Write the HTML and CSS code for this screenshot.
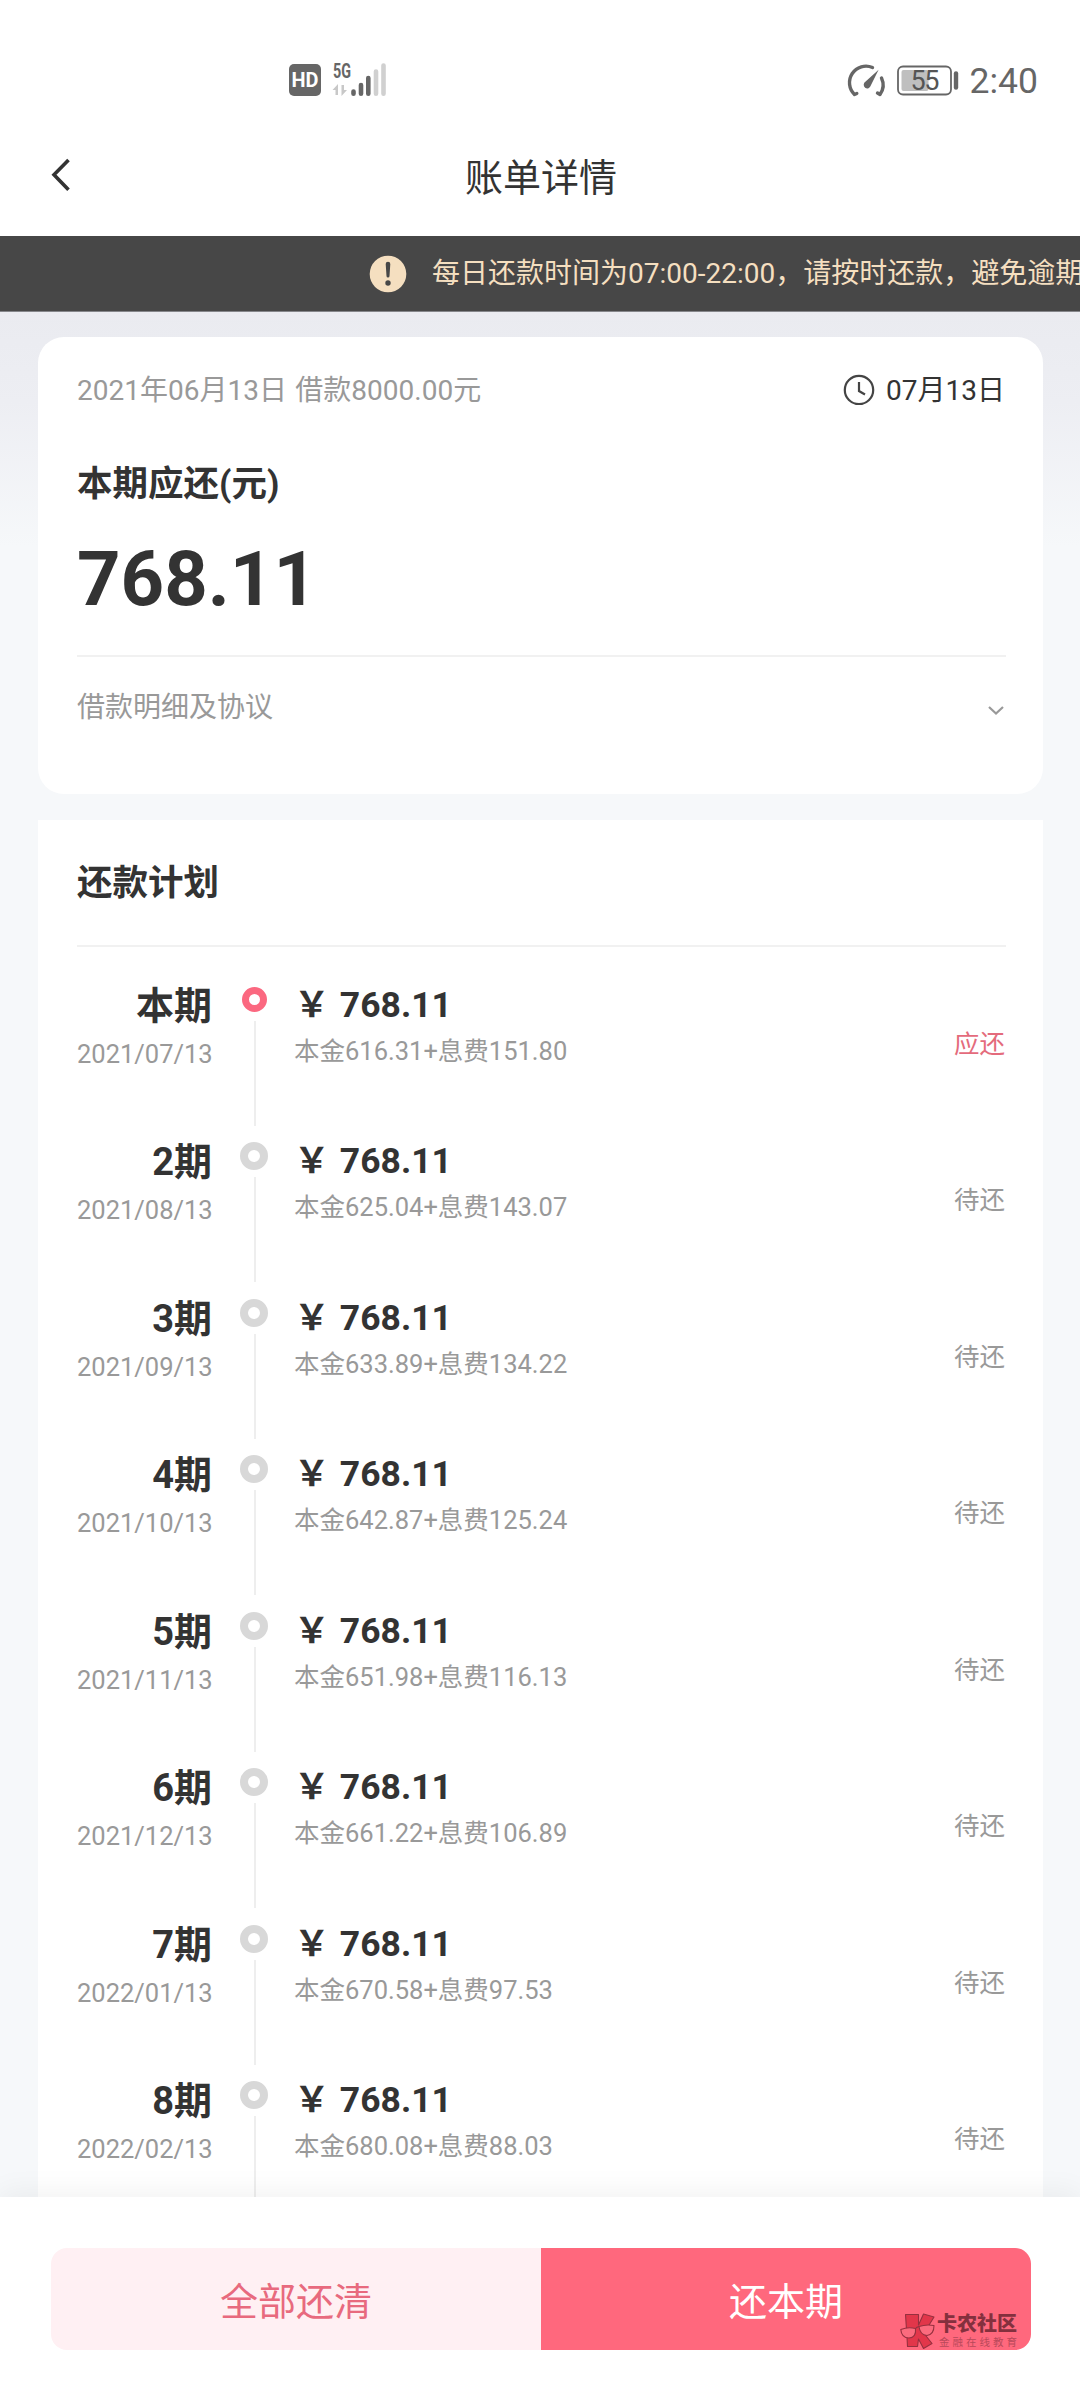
FILE: index.html
```html
<!DOCTYPE html>
<html lang="zh-CN">
<head>
<meta charset="utf-8">
<title>账单详情</title>
<link rel="stylesheet" href="styles.css">
</head>
<body>
<div class="screen">
  <div class="status-bar">
    <svg class="status-signal" width="100" height="38" viewBox="0 0 100 38">
      <rect x="1" y="4" width="32" height="32" rx="5" fill="#666"/>
      <text x="17" y="26.500" class="hd" text-anchor="middle" textLength="27" lengthAdjust="spacingAndGlyphs">HD</text>
      <text x="45" y="18" class="net" textLength="18" lengthAdjust="spacingAndGlyphs">5G</text>
      <path d="M44.500 30L50 24v11h-2.500v-5zM59 30l-5.500 6V25H56v5z" fill="#c8c8c8"/>
      <g stroke-width="4.600" stroke-linecap="round">
        <path d="M65.500 31.500v2.200M73 25v8.700M80.300 18v15.700" stroke="#666"/>
        <path d="M88 11.500v22.200M95.500 5.500v28.200" stroke="#d0d0d0"/>
      </g>
    </svg>
    <svg class="status-power" width="116" height="38" viewBox="0 0 116 38">
      <g fill="none" stroke="#666" stroke-width="3.400" stroke-linecap="round" stroke-linejoin="round">
        <path d="M26.500 7.500A16.500 16.500 0 0 0 8.500 34.500L10.800 33.500M35.500 18A16.500 16.500 0 0 1 34 34.500L31.500 33"/>
      </g>
      <path d="M32.600 9.800L24.800 25.600A3.600 3.600 0 1 1 19.600 21.600z" fill="#666"/>
      <rect x="52" y="6.500" width="53" height="28" rx="5" fill="none" stroke="#666" stroke-width="1.800"/>
      <rect x="55.500" y="10" width="27" height="21" rx="2" fill="#bfbfbf"/>
      <text x="79" y="29.500" class="level" text-anchor="middle" textLength="29">55</text>
      <path d="M110 13.500v14" stroke="#666" stroke-width="4.400" stroke-linecap="round"/>
    </svg>
    <span class="clock">2:40</span>
  </div>

  <header class="nav">
    <svg class="back" width="24" height="38" viewBox="0 0 24 38"><path d="M19.500 4L5 18.800 19.500 33.800" fill="none" stroke="#333" stroke-width="3.600"/></svg>
    <h1 class="nav-title">账单详情</h1>
  </header>

  <div class="notice">
    <svg class="notice-icon" width="38" height="38" viewBox="0 0 38 38">
      <circle cx="19" cy="19" r="18.300" fill="#f5dfc0"/>
      <path d="M16.700 9a2.300 2.300 0 0 1 4.600 0l-.8 12a1.500 1.500 0 0 1-3 0z" fill="#474747"/>
      <circle cx="19" cy="28" r="2.700" fill="#474747"/>
    </svg>
    <span class="notice-text">每日还款时间为07:00-22:00，请按时还款，避免逾期</span>
  </div>

  <main class="content">
    <section class="card summary">
      <div class="summary-head">
        <span class="loan">2021年06月13日 借款8000.00元</span>
        <span class="due">
          <svg width="32" height="34" viewBox="0 0 32 34" fill="none" stroke="#444"><circle cx="16" cy="19" r="14.200" stroke-width="2.200"/><path d="M16 11v9l6 3.500" stroke-width="2.200"/></svg>
          07月13日
        </span>
      </div>
      <h2 class="summary-label">本期应还(元)</h2>
      <div class="summary-amount">768.11</div>
      <div class="summary-more">
        <span>借款明细及协议</span>
        <svg class="chevron" width="18" height="12" viewBox="0 0 18 12"><path d="M2 2l7 6.500L16 2" fill="none" stroke="#999" stroke-width="2.200"/></svg>
      </div>
    </section>

    <section class="card plan">
      <h2 class="plan-title">还款计划</h2>
      <ul class="periods">
        <li class="period current">
          <div class="when"><b>本期</b><span>2021/07/13</span></div>
          <div class="rail"><i class="dot"></i><i class="line"></i></div>
          <div class="what"><b>￥ 768.11</b><span>本金616.31+息费151.80</span></div>
          <span class="state">应还</span>
        </li>
        <li class="period">
          <div class="when"><b>2期</b><span>2021/08/13</span></div>
          <div class="rail"><i class="dot"></i><i class="line"></i></div>
          <div class="what"><b>￥ 768.11</b><span>本金625.04+息费143.07</span></div>
          <span class="state">待还</span>
        </li>
        <li class="period">
          <div class="when"><b>3期</b><span>2021/09/13</span></div>
          <div class="rail"><i class="dot"></i><i class="line"></i></div>
          <div class="what"><b>￥ 768.11</b><span>本金633.89+息费134.22</span></div>
          <span class="state">待还</span>
        </li>
        <li class="period">
          <div class="when"><b>4期</b><span>2021/10/13</span></div>
          <div class="rail"><i class="dot"></i><i class="line"></i></div>
          <div class="what"><b>￥ 768.11</b><span>本金642.87+息费125.24</span></div>
          <span class="state">待还</span>
        </li>
        <li class="period">
          <div class="when"><b>5期</b><span>2021/11/13</span></div>
          <div class="rail"><i class="dot"></i><i class="line"></i></div>
          <div class="what"><b>￥ 768.11</b><span>本金651.98+息费116.13</span></div>
          <span class="state">待还</span>
        </li>
        <li class="period">
          <div class="when"><b>6期</b><span>2021/12/13</span></div>
          <div class="rail"><i class="dot"></i><i class="line"></i></div>
          <div class="what"><b>￥ 768.11</b><span>本金661.22+息费106.89</span></div>
          <span class="state">待还</span>
        </li>
        <li class="period">
          <div class="when"><b>7期</b><span>2022/01/13</span></div>
          <div class="rail"><i class="dot"></i><i class="line"></i></div>
          <div class="what"><b>￥ 768.11</b><span>本金670.58+息费97.53</span></div>
          <span class="state">待还</span>
        </li>
        <li class="period">
          <div class="when"><b>8期</b><span>2022/02/13</span></div>
          <div class="rail"><i class="dot"></i><i class="line"></i></div>
          <div class="what"><b>￥ 768.11</b><span>本金680.08+息费88.03</span></div>
          <span class="state">待还</span>
        </li>
      </ul>
    </section>
  </main>

  <footer class="actions">
    <button class="btn btn-all">全部还清</button>
    <button class="btn btn-now">还本期</button>
    <div class="watermark">
      <svg width="36" height="36" viewBox="0 0 36 36" stroke="#96303f" stroke-width="1.100" stroke-linejoin="round">
        <path d="M5.500 1.500H18.500V12L23.500 1 34 4 26 17 24.500 21 32 30.500 23.500 35.500 18.500 26 17.500 33.500H7.500L7 24z" fill="#e2364a"/>
        <path d="M.8 16.500Q8 13.500 15.500 15.500 16.500 24.500 9 25 1.500 25 .8 16.500zM19 13.500Q26 11 34 12.500 34 21.500 27 22.500 20 22 19 13.500zM15.500 15.800Q17 13.500 19 14" fill="#fb6b7e"/>
      </svg>
      <div class="mark-text"><b>卡农社区</b><span>金融在线教育</span></div>
    </div>
  </footer>
</div>
</body>
</html>
```
FILE: styles.css
```css
* { box-sizing: border-box; }
body, h1, h2, ul { margin: 0; padding: 0; }
body {
  width: 1080px;
  font-family: Roboto, "Noto Sans CJK SC", sans-serif;
  color: #333;
  background: #fff;
}
.screen {
  display: flex;
  flex-direction: column;
  height: 2400px;
  overflow: hidden;
}

.status-bar {
  display: flex;
  flex: none;
  height: 120px;
  padding: 60px 42px 0 288px;
  color: #666;
}
.status-signal { margin-right: auto; }
.status-power { margin-right: 8px; }
.clock { font-size: 35.500px; line-height: 43px; }
.hd { font-size: 20px; font-weight: 700; fill: #fff; }
.net { font-size: 20px; font-weight: 700; fill: #666; }
.level { font-size: 27px; fill: #555; }

.nav {
  display: grid;
  grid-template-columns: 90px 1fr 88px;
  align-items: center;
  flex: none;
  height: 116px;
}
.back { margin: -6px 0 0 49px; }
.nav-title {
  grid-column: 2;
  font-size: 38px;
  font-weight: 400;
  line-height: 56px;
  text-align: center;
}

.notice {
  display: flex;
  align-items: center;
  flex: none;
  gap: 25px;
  height: 76px;
  padding-left: 369px;
  overflow: hidden;
  background: #474747;
  border-bottom: 1px solid #85868a;
}
.notice-icon { flex: none; }
.notice-text {
  color: #f5dfc0;
  font-size: 28px;
  line-height: 40px;
  white-space: nowrap;
}

.content {
  display: flex;
  flex: 1;
  flex-direction: column;
  gap: 26px;
  min-height: 0;
  padding: 25px 37px 0 38px;
  overflow: hidden;
  background: linear-gradient(#eaebf0 0, #edeef3 90px, #f6f8fa 235px);
}
.card { flex: none; padding: 0 37px 0 39px; background: #fff; }

.summary { height: 457px; border-radius: 26px; }
.summary-head {
  display: flex;
  align-items: center;
  justify-content: space-between;
  height: 102px;
  padding-right: 1px;
  font-size: 28px;
}
.loan { color: #999; word-spacing: 1.500px; }
.due { display: flex; align-items: center; gap: 11px; }
.summary-label { font-size: 35.500px; line-height: 50px; font-weight: 700; margin-top: 20px; }
.summary-amount {
  height: 148px;
  padding-top: 25px;
  font-size: 76px;
  font-weight: 700;
  line-height: 90px;
  border-bottom: 2px solid #f1f1f1;
}
.summary-more {
  display: flex;
  align-items: center;
  justify-content: space-between;
  height: 95px;
  padding-right: 1px;
  color: #999;
  font-size: 28px;
}
.chevron { margin-top: 13px; }

.plan-title {
  height: 127px;
  font-size: 35.500px;
  font-weight: 700;
  line-height: 126px;
  border-bottom: 2px solid #f1f1f1;
}
.periods { list-style: none; padding-top: 27px; }
.period { display: flex; height: 156.450px; }
.when { width: 135px; text-align: right; white-space: nowrap; }
.when b, .what b, .when span, .what span { display: block; }
.when b { font-size: 38px; line-height: 60px; padding-top: 2px; margin-bottom: -2px; }
.when span, .what span, .state { font-size: 25.500px; line-height: 38px; color: #999; }
.when span { margin-top: 1px; }
.rail {
  display: flex;
  flex-direction: column;
  align-items: center;
  width: 28px;
  margin-left: 28px;
}
.dot {
  width: 28px;
  height: 28px;
  margin-top: 12px;
  border: 8px solid #d8d8d8;
  border-radius: 50%;
}
.current .dot {
  width: 25px;
  height: 25px;
  margin: 13px 0 2px;
  border-color: #fb6880;
  border-width: 7px;
}
.line { width: 2px; height: 105px; margin: 7px 0 0 1px; background: #eee; }
.what { flex: 1; margin-left: 26px; white-space: nowrap; }
.what b { font-size: 35.500px; line-height: 58px; padding-top: 2px; margin-bottom: -2px; word-spacing: 1.500px; }
.what span { margin-top: -2px; }
.state { margin-top: 51px; padding-right: 1px; }
.current .state { color: #e46b7c; }

.actions {
  position: relative;
  z-index: 1;
  display: flex;
  flex: none;
  height: 203px;
  padding: 51px 49px 50px 51px;
  background: #fff;
  box-shadow: 0 -4px 28px rgba(0, 0, 0, .06);
}
.btn {
  flex: 1;
  padding: 0 0 1px;
  border: 0;
  font: inherit;
  font-size: 38px;
}
.btn-all { color: #e86a7e; background: #fff0f3; border-radius: 16px 0 0 16px; }
.btn-now { color: #fff; background: #ff687d; border-radius: 0 16px 16px 0; }
.watermark {
  position: absolute;
  left: 900px;
  top: 116px;
  display: flex;
  gap: 1px;
}
.mark-text { display: flex; flex-direction: column; padding-top: 1px; }
.mark-text b { color: #84303e; font-size: 20px; font-weight: 900; line-height: 20px; }
.mark-text span { margin: 2px 0 0 2px; color: #b9485a; font-size: 10.500px; letter-spacing: 3px; line-height: 13px; }
```
